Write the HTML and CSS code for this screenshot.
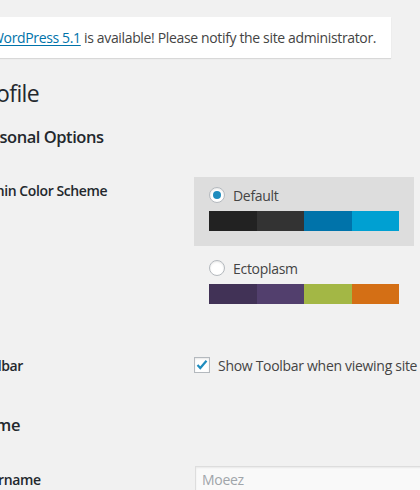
FILE: index.html
```html
<!DOCTYPE html>
<html>
<head>
<meta charset="utf-8">
<link rel="stylesheet" href="styles.css">
</head>
<body>
<div class="page">
  <div class="nag"><a href="#" class="link">WordPress 5.1</a> is available! Please notify the site administrator.</div>
  <div class="wrap">
    <h1 class="title">Profile</h1>
    <h2 class="section">Personal Options</h2>
    <div class="row row-scheme">
      <div class="th">Admin Color Scheme</div>
      <div class="td">
        <div class="color-option selected">
          <div class="opt-label"><span class="radio checked"></span><span>Default</span></div>
          <div class="palette">
            <span class="sw" style="background:#222"></span>
            <span class="sw" style="background:#333"></span>
            <span class="sw" style="background:#0073aa"></span>
            <span class="sw" style="background:#00a0d2"></span>
          </div>
        </div>
        <div class="color-option">
          <div class="opt-label"><span class="radio"></span><span>Ectoplasm</span></div>
          <div class="palette">
            <span class="sw" style="background:#413256"></span>
            <span class="sw" style="background:#523f6d"></span>
            <span class="sw" style="background:#a3b745"></span>
            <span class="sw" style="background:#d46f15"></span>
          </div>
        </div>
      </div>
    </div>
    <div class="row row-toolbar">
      <div class="th th-toolbar">Toolbar</div>
      <div class="td td-toolbar">
        <span class="checkbox"><svg width="14" height="14" viewBox="0 0 14 14"><polyline points="2.5,7 5.3,10 11.5,2.8" fill="none" stroke="#1e8cbe" stroke-width="2.2" stroke-linecap="butt" stroke-linejoin="miter"/></svg></span>
        <span class="cb-text">Show Toolbar when viewing site</span>
      </div>
    </div>
    <h2 class="section section-name">Name</h2>
    <div class="row row-user">
      <div class="th">Username</div>
      <div class="td">
        <div class="input">Moeez</div>
      </div>
    </div>
  </div>
</div>
</body>
</html>
```
FILE: styles.css
```css
html, body {
  margin: 0;
  padding: 0;
  background: #f1f1f1;
  overflow: hidden;
}
body {
  font-family: "Open Sans", "Noto Sans", sans-serif;
  font-size: 13px;
  color: #444;
  width: 420px;
  height: 490px;
}
.page {
  margin-left: -26px;
  width: 520px;
}
.nag {
  display: block;
  width: 419px;
  box-sizing: border-box;
  margin: 17px 0 0 -2px;
  padding: 11px 15px;
  height: 41px;
  background: #fff;
  border-left: 4px solid #ffba00;
  box-shadow: 0 1px 1px 0 rgba(0,0,0,.1);
  font-size: 14px;
  line-height: 19px;
  letter-spacing: -0.35px;
  white-space: nowrap;
}
.link {
  color: #0073aa;
  text-decoration: underline;
  text-decoration-thickness: 1px;
  text-underline-offset: 2px;
}
.title {
  margin: 20px 0 0;
  font-size: 23px;
  font-weight: 400;
  line-height: 30px;
  letter-spacing: -0.6px;
  color: #23282d;
}
.section {
  margin: 17px 0 0;
  font-size: 16.5px;
  font-weight: 600;
  line-height: 24px;
  letter-spacing: -0.45px;
  color: #23282d;
}
.section-name {
  margin-top: 15px;
}
.row {
  display: flex;
}
.row-scheme {
  margin-top: 13px;
}
.th {
  width: 200px;
  padding: 20px 10px 20px 0;
  font-size: 14px;
  font-weight: 600;
  line-height: 18px;
  letter-spacing: -0.4px;
  color: #23282d;
  flex: none;
}
.td {
  padding: 15px 10px;
  flex: 1;
}
.color-option {
  width: 220px;
  box-sizing: border-box;
  padding: 10px 15px 15px;
  margin-bottom: 4px;
}
.color-option:last-child {
  margin-bottom: 0;
}
.color-option.selected {
  background: #ddd;
}
.opt-label {
  display: flex;
  align-items: center;
  height: 16px;
  margin-bottom: 8px;
  font-size: 14px;
  letter-spacing: -0.3px;
  color: #444;
}
.radio {
  width: 16px;
  height: 16px;
  box-sizing: border-box;
  border: 1px solid #b4b9be;
  border-radius: 50%;
  background: #fff;
  box-shadow: inset 0 1px 2px rgba(0,0,0,.1);
  margin-right: 8px;
  display: flex;
  align-items: center;
  justify-content: center;
  flex: none;
}
.radio.checked::before {
  content: "";
  width: 8px;
  height: 8px;
  border-radius: 50%;
  background: #1e8cbe;
}
.palette {
  display: flex;
  height: 20px;
}
.sw {
  flex: 1;
}
.row-toolbar {
  height: 64px;
}
.th-toolbar {
  padding-top: 23px;
}
.td-toolbar {
  padding-top: 22px;
  display: flex;
  align-items: center;
  height: 18px;
}
.checkbox {
  width: 16px;
  height: 16px;
  box-sizing: border-box;
  border: 1px solid #b4b9be;
  background: #fff;
  box-shadow: inset 0 1px 2px rgba(0,0,0,.1);
  margin-right: 8px;
  display: flex;
  align-items: center;
  justify-content: center;
  flex: none;
}
.checkbox svg {
  display: block;
}
.cb-text {
  font-size: 14px;
  letter-spacing: -0.3px;
  color: #444;
  white-space: nowrap;
}
.row-user {
  margin-top: 14px;
}
.input {
  width: 325px;
  height: 28px;
  box-sizing: border-box;
  margin-left: 1px;
  border: 1px solid #ddd;
  background: #f9f9f9;
  box-shadow: inset 0 1px 2px rgba(0,0,0,.07);
  padding: 3px 6px;
  font-size: 14px;
  line-height: 20px;
  letter-spacing: -0.3px;
  color: #a0a5aa;
}
```
